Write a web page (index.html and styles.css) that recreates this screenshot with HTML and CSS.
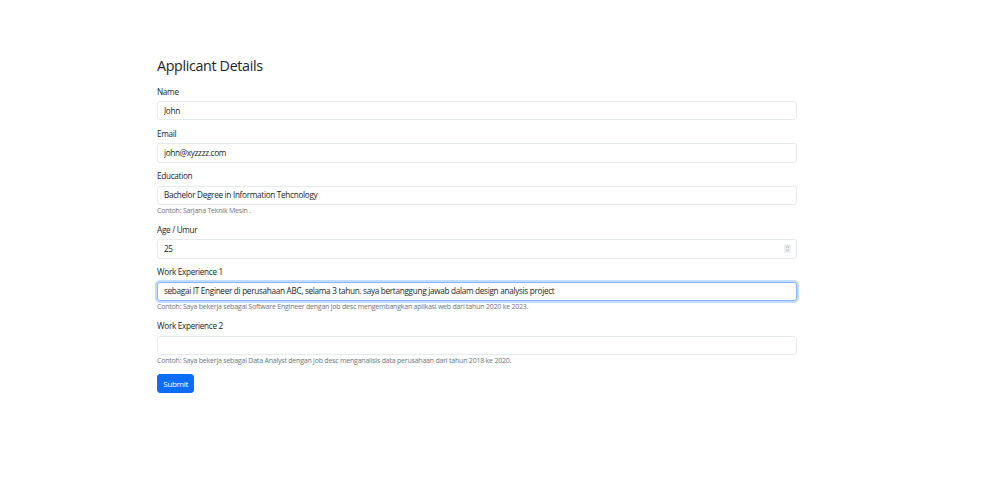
FILE: index.html
```html
<!DOCTYPE html>
<html lang="en">
<head>
    <meta charset="UTF-8">
    <meta name="viewport" content="width=device-width, initial-scale=1.0">
    <title>Applicant Details</title>
    <link rel="stylesheet" href="styles.css">
</head>
<body>
    <div class="container">
        <h2>Applicant Details</h2>

        <form>
            <div class="field">
                <label for="name">Name</label>
                <input type="text" id="name" class="form-control" value="John">
            </div>
            <div class="field">
                <label for="email">Email</label>
                <input type="email" id="email" class="form-control" value="john@xyzzzz.com">
            </div>
            <div class="field">
                <label for="education">Education</label>
                <input type="text" id="education" class="form-control" value="Bachelor Degree in Information Tehcnology">
                <div class="form-text">Contoh: Sarjana Teknik Mesin .</div>
            </div>
            <div class="field">
                <label for="age">Age / Umur</label>
                <div class="number-wrap">
                    <input type="number" id="age" class="form-control" value="25">
                    <span class="spinner">
                        <svg width="5" height="7" viewBox="0 0 5 7">
                            <path d="M1 2.6 L2.5 1.2 L4 2.6 M1 4.4 L2.5 5.8 L4 4.4" fill="none" stroke="#8a8f94" stroke-width="0.6"/>
                        </svg>
                    </span>
                </div>
            </div>
            <div class="field">
                <label for="exp1">Work Experience 1</label>
                <input type="text" id="exp1" class="form-control active" value="sebagai IT Engineer di perusahaan ABC, selama 3 tahun. saya bertanggung jawab dalam design analysis project">
                <div class="form-text">Contoh: Saya bekerja sebagai Software Engineer dengan job desc mengembangkan aplikasi web dari tahun 2020 ke 2023.</div>
            </div>
            <div class="field">
                <label for="exp2">Work Experience 2</label>
                <input type="text" id="exp2" class="form-control">
                <div class="form-text">Contoh: Saya bekerja sebagai Data Analyst dengan job desc menganalisis data perusahaan dari tahun 2018 ke 2020.</div>
            </div>
            <button type="button" class="btn">Submit</button>
        </form>
    </div>
</body>
</html>
```

FILE: styles.css
```css
* {
    margin: 0;
    padding: 0;
    box-sizing: border-box;
}
body {
    font-family: 'Open Sans', 'Noto Sans', sans-serif;
    font-size: 8.2px;
    line-height: 11.7px;
    color: #212529;
    background-color: #fff;
}
.container {
    width: 640px;
    margin-left: 157px;
    padding-top: 57px;
}
h2 {
    font-size: 14.3px;
    font-weight: 400;
    line-height: 18px;
    margin-bottom: 10.5px;
    letter-spacing: -0.35px;
}
.field {
    margin-bottom: 7.5px;
}
label {
    display: inline-block;
    margin-bottom: 3.9px;
    letter-spacing: -0.3px;
}
.form-control {
    display: block;
    width: 100%;
    padding: 2.75px 5.9px;
    font-family: inherit;
    font-size: 8.2px;
    line-height: 11.7px;
    color: #212529;
    background-color: #fff;
    border: 1px solid #e7eaed;
    border-radius: 3px;
    outline: none;
    letter-spacing: -0.3px;
}
.form-control.active {
    border-color: #86b7fe;
    box-shadow: 0 0 0 2px rgba(13, 110, 253, .25);
}
.number-wrap {
    position: relative;
}
.number-wrap input::-webkit-inner-spin-button {
    -webkit-appearance: none;
}
.spinner {
    position: absolute;
    right: 6px;
    top: 5px;
    width: 7px;
    height: 9px;
    display: flex;
    align-items: center;
    justify-content: center;
    background-color: #eceef0;
    border-radius: 1px;
}
.spinner svg {
    display: block;
}
.form-text {
    margin-top: 1.5px;
    font-size: 7px;
    line-height: 10px;
    color: #6c757d;
    letter-spacing: -0.21px;
}
.btn {
    display: inline-block;
    padding: 2.9px 5.3px;
    font-family: inherit;
    font-size: 8px;
    line-height: 11.7px;
    color: #fff;
    background-color: #0d6efd;
    border: 1px solid #0d6efd;
    border-radius: 3px;
    letter-spacing: -0.3px;
    cursor: pointer;
}
```
